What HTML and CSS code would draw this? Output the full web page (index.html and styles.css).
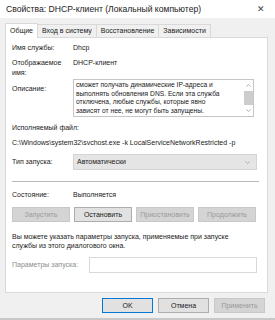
FILE: index.html
```html
<!DOCTYPE html>
<html lang="ru">
<head>
    <meta charset="UTF-8">
    <title>Свойства: DHCP-клиент</title>
    <link rel="stylesheet" href="styles.css">
</head>
<body>

<div class="window">
    <div class="titlebar">
        <span class="title">Свойства: DHCP-клиент (Локальный компьютер)</span>
        <span class="close">✕</span>
    </div>

    <div class="tabs">
        <div class="tab active">Общие</div>
        <div class="tab">Вход в систему</div>
        <div class="tab">Восстановление</div>
        <div class="tab">Зависимости</div>
    </div>

    <div class="panel">
        <div class="row">
            <div class="label">Имя службы:</div>
            <div class="value">Dhcp</div>
        </div>
        <div class="row row-name">
            <div class="label">Отображаемое<br>имя:</div>
            <div class="value">DHCP-клиент</div>
        </div>
        <div class="row row-desc">
            <div class="label label-desc">Описание:</div>
            <div class="descbox">
                <div class="desctext">сможет получать динамические IP-адреса и<br>выполнять обновления DNS. Если эта служба<br>отключена, любые службы, которые явно<br>зависят от нее, не могут быть запущены.</div>
                <div class="scrollbar">
                    <svg width="7" height="5" viewBox="0 0 7 5"><path d="M1.5 3.5 L3.5 1.5 L5.5 3.5" fill="none" stroke="#9a9a9a" stroke-width="0.8"/></svg>
                    <span class="thumb"></span>
                    <svg width="7" height="5" viewBox="0 0 7 5"><path d="M1.5 1.5 L3.5 3.5 L5.5 1.5" fill="none" stroke="#9a9a9a" stroke-width="0.8"/></svg>
                </div>
            </div>
        </div>

        <div class="caption">Исполняемый файл:</div>
        <div class="path">C:\Windows\system32\svchost.exe -k LocalServiceNetworkRestricted -p</div>

        <div class="row row-type">
            <div class="label">Тип запуска:</div>
            <div class="select">
                <span>Автоматически</span>
                <svg width="7" height="5" viewBox="0 0 7 5"><path d="M1.5 1.5 L3.5 3.5 L5.5 1.5" fill="none" stroke="#9a9a9a" stroke-width="0.8"/></svg>
            </div>
        </div>

        <div class="separator"></div>

        <div class="row row-state">
            <div class="label">Состояние:</div>
            <div class="value">Выполняется</div>
        </div>

        <div class="service-buttons">
            <button class="btn" disabled>Запустить</button>
            <button class="btn">Остановить</button>
            <button class="btn" disabled>Приостановить</button>
            <button class="btn" disabled>Продолжить</button>
        </div>

        <p class="hint">Вы можете указать параметры запуска, применяемые при запуске<br>службы из этого диалогового окна.</p>

        <div class="row row-params">
            <div class="label label-params">Параметры запуска:</div>
            <div class="param-input"></div>
        </div>
    </div>

    <div class="footer">
        <button class="btn btn-ok">OK</button>
        <button class="btn">Отмена</button>
        <button class="btn" disabled>Применить</button>
    </div>
</div>

</body>
</html>
```

FILE: styles.css
```css
* {
    box-sizing: border-box;
}
body {
    margin: 0;
    font-family: "Liberation Sans", Arial, sans-serif;
    font-size: 7px;
    color: #1a1a1a;
}
.window {
    width: 275px;
    height: 320px;
    background-color: #f0f0f0;
    border-bottom: 2px solid #c8c8c8;
    display: flex;
    flex-direction: column;
}
.titlebar {
    height: 18px;
    background-color: #fff;
    display: flex;
    align-items: center;
    justify-content: space-between;
    padding: 0 10px 0 6px;
}
.title {
    font-size: 8.6px;
    color: #222;
}
.close {
    font-size: 9px;
    color: #444;
}
.tabs {
    display: flex;
    padding: 4px 0 0 5px;
    height: 19px;
    align-items: flex-end;
}
.tab {
    height: 13px;
    line-height: 12px;
    padding: 0 4px;
    border: 1px solid #d9d9d9;
    border-bottom: none;
    margin-left: -1px;
    background-color: #f0f0f0;
}
.tab:first-child {
    margin-left: 0;
}
.tab.active {
    height: 15px;
    line-height: 14px;
    background-color: #fff;
    position: relative;
    z-index: 1;
    margin-bottom: -1px;
}
.panel {
    margin: 0 7px 0 5px;
    height: 256px;
    background-color: #fff;
    border: 1px solid #d9d9d9;
    padding: 5px 6px 0 6px;
}
.row {
    display: flex;
    line-height: 10px;
}
.label {
    width: 61px;
    flex-shrink: 0;
}
.row-name {
    margin-top: 5px;
}
.row-desc {
    margin-top: 1px;
}
.label-desc {
    padding-top: 5px;
}
.descbox {
    width: 181px;
    height: 38px;
    border: 1px solid #c6c6c6;
    display: flex;
    overflow: hidden;
}
.desctext {
    flex: 1;
    padding: 1px 2px;
    line-height: 8.6px;
    font-size: 6.7px;
    white-space: nowrap;
}
.scrollbar {
    width: 10px;
    display: flex;
    flex-direction: column;
    align-items: center;
    justify-content: space-between;
    padding: 3px 0;
}
.thumb {
    width: 9px;
    height: 14px;
    background-color: #cdcdcd;
}
.caption {
    margin-top: 6px;
    line-height: 10px;
}
.path {
    margin-top: 5px;
    line-height: 10px;
    white-space: nowrap;
}
.row-type {
    margin-top: 6px;
    align-items: center;
}
.select {
    width: 184px;
    height: 16px;
    background-color: #e5e5e5;
    border: 1px solid #d4d4d4;
    display: flex;
    align-items: center;
    justify-content: space-between;
    padding: 0 5px 0 3px;
}
.separator {
    margin: 11px 2px 0 0;
    border-top: 1px solid #b8b8b8;
}
.row-state {
    margin-top: 8px;
}
.service-buttons {
    display: flex;
    gap: 4px;
    margin-top: 7px;
}
.service-buttons .btn {
    width: 58px;
}
.btn {
    height: 15px;
    padding: 0;
    font-family: inherit;
    font-size: 7px;
    color: #1a1a1a;
    background-color: #e1e1e1;
    border: 1px solid #adadad;
}
.btn:disabled {
    color: #9a9a9a;
    background-color: #d4d4d4;
    border-color: #c8c8c8;
}
.hint {
    margin: 10px 0 0 0;
    line-height: 9px;
}
.row-params {
    margin-top: 7px;
    align-items: center;
}
.label-params {
    width: 77px;
    color: #8c8c8c;
}
.param-input {
    width: 168px;
    height: 16px;
    border: 1px solid #d9d9d9;
}
.footer {
    display: flex;
    justify-content: flex-end;
    gap: 5px;
    padding: 5px 10px 0 0;
}
.footer .btn {
    width: 51px;
    height: 15px;
}
.btn-ok {
    border-color: #0078d7;
}
```
